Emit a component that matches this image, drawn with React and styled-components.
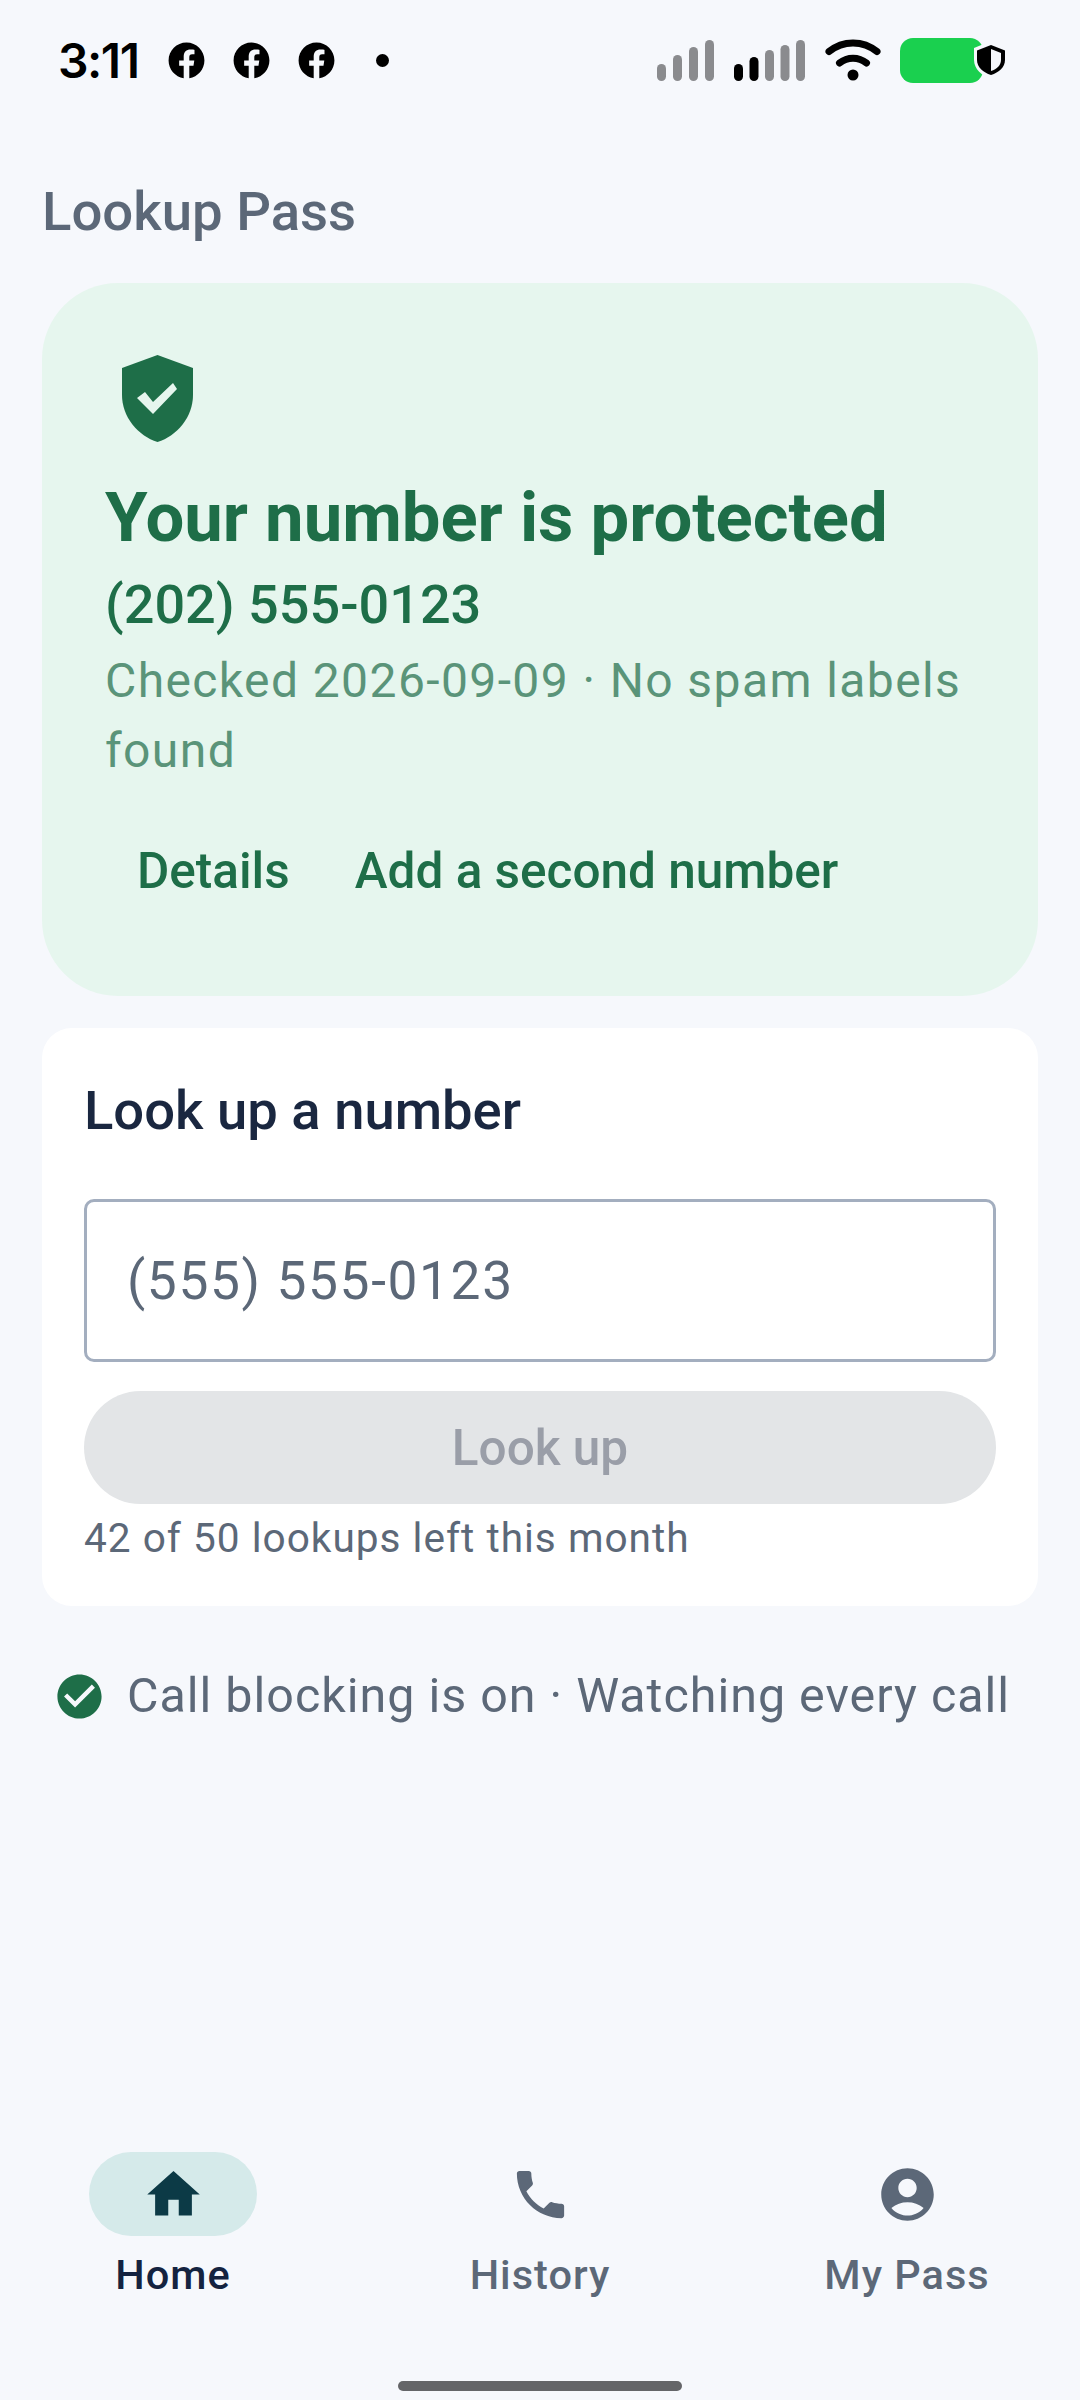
import React from "react";
import styled, { createGlobalStyle } from "styled-components";
import { FaFacebook } from "react-icons/fa";
import { MdCheckCircle, MdHome, MdPhone, MdAccountCircle } from "react-icons/md";

const GlobalStyle = createGlobalStyle`
  html, body {
    margin: 0;
    padding: 0;
    background: #f6f8fc;
    font-family: Roboto, "Noto Sans", sans-serif;
  }
`;

const Screen = styled.div`
  width: 1080px;
  height: 2400px;
  display: flex;
  flex-direction: column;
  background: #f6f8fc;
  overflow: hidden;
`;

const StatusBar = styled.div`
  height: 120px;
  flex: none;
  display: flex;
  align-items: center;
  justify-content: space-between;
  padding: 0 97px 0 58px;
  box-sizing: border-box;
`;

const StatusLeft = styled.div`
  display: flex;
  align-items: center;
  color: #000;
`;

const Time = styled.span`
  font-family: Inter, sans-serif;
  font-weight: 600;
  font-size: 48px;
  letter-spacing: -1.5px;
  width: 110px;
`;

const FbIcon = styled(FaFacebook)`
  width: 37px;
  height: 37px;
  margin-right: 28px;
`;

const Dot = styled.span`
  width: 13px;
  height: 13px;
  border-radius: 50%;
  background: #000;
  margin-left: 13px;
`;

const StatusRight = styled.div`
  display: flex;
  align-items: center;
`;

const Signal = styled.svg`
  height: 41px;
  margin-right: 20px;
  display: block;
`;

const Wifi = styled.svg`
  width: 56px;
  height: 42px;
  margin-right: 19px;
  display: block;
`;

const Battery = styled.div`
  position: relative;
  width: 83px;
  height: 45px;
  border-radius: 13px;
  background: #1ad04f;
`;

const BatteryShield = styled.svg`
  position: absolute;
  left: 72px;
  top: 2px;
  width: 38px;
  height: 40px;
`;

const Main = styled.main`
  flex: 1;
  display: flex;
  flex-direction: column;
  padding: 61px 42px 0;
`;

const AppTitle = styled.h1`
  margin: 0 0 42px;
  font-size: 54.5px;
  line-height: 60px;
  font-weight: 500;
  color: #5c6878;
`;

const StatusCard = styled.section`
  height: 713px;
  box-sizing: border-box;
  background: #e6f6ee;
  border-radius: 76px;
  padding: 72px 63px 0;
  color: #1e6e48;
`;

const ShieldIcon = styled.svg`
  display: block;
  width: 71px;
  height: 87px;
  margin-left: 17px;
`;

const Headline = styled.h2`
  margin: 36px 0 0;
  font-size: 68.8px;
  line-height: 80px;
  font-weight: 700;
`;

const PhoneNumber = styled.div`
  margin-top: 15px;
  font-size: 54px;
  line-height: 64px;
  font-weight: 500;
`;

const CheckedLine = styled.p`
  margin: 9px 0 0;
  font-size: 48px;
  line-height: 70px;
  letter-spacing: 1.4px;
  color: #5a9479;
`;

const CardActions = styled.div`
  display: flex;
  gap: 65px;
  margin: 48px 0 0 32px;
`;

const TextAction = styled.button`
  padding: 0;
  border: 0;
  background: none;
  font-family: inherit;
  font-size: 49.5px;
  line-height: 74px;
  font-weight: 500;
  color: #1e6e48;
`;

const LookupCard = styled.section`
  height: 578px;
  box-sizing: border-box;
  margin-top: 32px;
  background: #fff;
  border-radius: 30px;
  padding: 51px 42px 0;
`;

const LookupTitle = styled.h3`
  margin: 0;
  font-size: 54.4px;
  line-height: 64px;
  font-weight: 500;
  color: #1a2740;
`;

const NumberInput = styled.div`
  height: 163px;
  box-sizing: border-box;
  margin-top: 56px;
  padding: 0 40px;
  display: flex;
  align-items: center;
  border: 3px solid #a3aebf;
  border-radius: 10px;
  font-size: 53.3px;
  letter-spacing: 1.6px;
  color: #5c6878;
`;

const LookupButton = styled.button`
  display: block;
  width: 100%;
  height: 113px;
  margin-top: 29px;
  border: 0;
  border-radius: 57px;
  background: #e3e5e7;
  font-family: inherit;
  font-size: 49.5px;
  font-weight: 500;
  color: #9a9ea8;
`;

const Remaining = styled.div`
  margin-top: 9px;
  font-size: 40.6px;
  line-height: 50px;
  letter-spacing: 1px;
  color: #5c6878;
`;

const BlockingRow = styled.div`
  display: flex;
  align-items: center;
  margin: 62px 0 0 11px;
  font-size: 48.4px;
  line-height: 56px;
  letter-spacing: 1px;
  color: #5c6878;
  white-space: nowrap;
`;

const BlockingIcon = styled(MdCheckCircle)`
  flex: none;
  width: 53px;
  height: 53px;
  margin-right: 21px;
  color: #1e6e48;
`;

const BottomNav = styled.nav`
  flex: none;
  display: grid;
  grid-template-columns: repeat(3, 367px);
  justify-content: center;
`;

const NavItem = styled.div`
  display: flex;
  flex-direction: column;
  align-items: center;
  gap: 14px;
`;

const NavPill = styled.div`
  width: 168px;
  height: 84px;
  border-radius: 42px;
  display: flex;
  align-items: center;
  justify-content: center;
  background: ${({ $active }) => ($active ? "#d5eaea" : "transparent")};
  color: ${({ $active }) => ($active ? "#0c3a46" : "#5c6878")};

  svg {
    width: 63px;
    height: 63px;
  }
`;

const NavLabel = styled.span`
  font-size: 41.5px;
  line-height: 50px;
  font-weight: 500;
  letter-spacing: 1px;
  color: ${({ $active }) => ($active ? "#142340" : "#5c6878")};
`;

const HomeBarWrap = styled.div`
  flex: none;
  height: 100px;
  padding-top: 81px;
  box-sizing: border-box;
  display: flex;
  justify-content: center;
`;

const HomeBar = styled.div`
  width: 284px;
  height: 10px;
  border-radius: 5px;
  background: #646568;
`;

function SignalIcon({ heights, dark, pitch }) {
  const width = (heights.length - 1) * pitch + 9;
  return (
    <Signal viewBox={`0 0 ${width} 41`} width={width}>
      {heights.map((h, i) => (
        <rect
          key={i}
          x={i * pitch}
          y={41 - h}
          width="9"
          height={h}
          rx="4.5"
          fill={i < dark ? "#000" : "#8a8b8e"}
        />
      ))}
    </Signal>
  );
}

const navItems = [
  { label: "Home", Icon: MdHome, active: true },
  { label: "History", Icon: MdPhone },
  { label: "My Pass", Icon: MdAccountCircle },
];

export default function App() {
  return (
    <Screen>
      <GlobalStyle />
      <StatusBar>
        <StatusLeft>
          <Time>3:11</Time>
          <FbIcon />
          <FbIcon />
          <FbIcon />
          <Dot />
        </StatusLeft>
        <StatusRight>
          <SignalIcon heights={[17, 26, 34, 41]} dark={0} pitch={16} />
          <SignalIcon heights={[17, 24, 31, 36, 41]} dark={2} pitch={15.5} />
          <Wifi viewBox="0 0 56 42">
            <path d="M4 12.5C18 1 38 1 52 12.5" fill="none" stroke="#000" strokeWidth="7" strokeLinecap="round" />
            <path d="M14.5 24C22.5 17.5 33.5 17.5 41.5 24" fill="none" stroke="#000" strokeWidth="7" strokeLinecap="round" />
            <circle cx="28" cy="36" r="5.5" fill="#000" />
          </Wifi>
          <Battery>
            <BatteryShield viewBox="0 0 38 40">
              <path d="M19 1 L36 8 V20 C36 29 28 36 19 39 C10 36 2 29 2 20 V8 Z" fill="#f6f8fc" />
              <path d="M19 5 L33 10.500 V20 C33 27 27 32.500 19 35 C11 32.500 5 27 5 20 V10.500 Z" fill="#000" />
              <path d="M19 9 L29 13 V20 C29 25 25 29 19 31 Z" fill="#f6f8fc" />
            </BatteryShield>
          </Battery>
        </StatusRight>
      </StatusBar>

      <Main>
        <AppTitle>Lookup Pass</AppTitle>
        <StatusCard>
          <ShieldIcon viewBox="0 0 71 87">
            <path d="M35.500 0 L71 13 V40 C71 62 55 81 35.500 87 C16 81 0 62 0 40 V13 Z" fill="#1e6e48" />
            <path d="M15 43 L23 37 L31 47 L51 28 L55 34 L31 59 Z" fill="#e6f6ee" />
          </ShieldIcon>
          <Headline>Your number is protected</Headline>
          <PhoneNumber>(202) 555-0123</PhoneNumber>
          <CheckedLine>Checked 2026-09-09 · No spam labels found</CheckedLine>
          <CardActions>
            <TextAction>Details</TextAction>
            <TextAction>Add a second number</TextAction>
          </CardActions>
        </StatusCard>

        <LookupCard>
          <LookupTitle>Look up a number</LookupTitle>
          <NumberInput>(555) 555-0123</NumberInput>
          <LookupButton>Look up</LookupButton>
          <Remaining>42 of 50 lookups left this month</Remaining>
        </LookupCard>

        <BlockingRow>
          <BlockingIcon />
          Call blocking is on · Watching every call
        </BlockingRow>
      </Main>

      <BottomNav>
        {navItems.map(({ label, Icon, active }) => (
          <NavItem key={label}>
            <NavPill $active={active}>
              <Icon />
            </NavPill>
            <NavLabel $active={active}>{label}</NavLabel>
          </NavItem>
        ))}
      </BottomNav>
      <HomeBarWrap>
        <HomeBar />
      </HomeBarWrap>
    </Screen>
  );
}
